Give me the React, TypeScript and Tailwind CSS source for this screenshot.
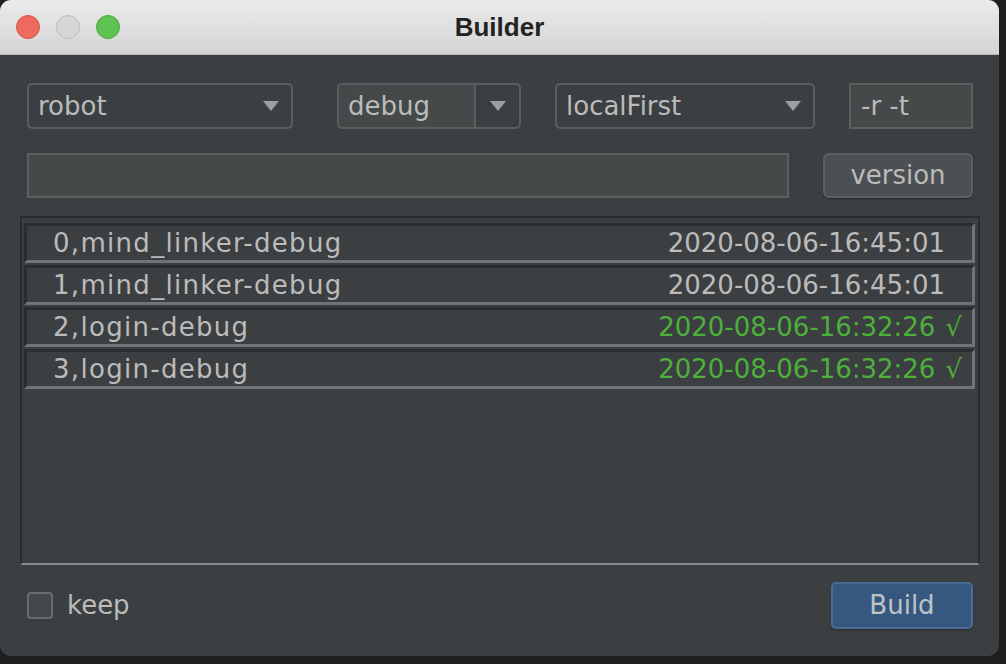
import React from "react";

type Build = { name: string; time: string; done: boolean };

const builds: Build[] = [
    { name: "0,mind_linker-debug", time: "2020-08-06-16:45:01", done: false },
    { name: "1,mind_linker-debug", time: "2020-08-06-16:45:01", done: false },
    { name: "2,login-debug", time: "2020-08-06-16:32:26", done: true },
    { name: "3,login-debug", time: "2020-08-06-16:32:26", done: true },
];

function Arrow() {
    return (
        <svg width="16" height="10" viewBox="0 0 16 10">
            <polygon points="0,0 16,0 8,10" fill="#9c9fa2" />
        </svg>
    );
}

function Combo({ label, width }: { label: string; width: string }) {
    return (
        <div className={`${width} h-[46px] flex items-center justify-between border-2 border-[#5b5d5f] rounded-[5px] pl-[9px] pr-[12px]`}>
            <span>{label}</span>
            <Arrow />
        </div>
    );
}

export default function App() {
    return (
        <div className="w-[1006px] h-[664px] bg-[#1e1e1e] text-[#bbbbbb] text-[26px]" style={{ fontFamily: '"DejaVu Sans", sans-serif' }}>
            <div className="w-[999px] h-[656px] rounded-[11px] overflow-hidden flex flex-col bg-[#3c3f41]">

                {/* title bar */}
                <div className="h-[55px] shrink-0 grid grid-cols-[1fr_auto_1fr] items-center bg-gradient-to-b from-[#ebebeb] to-[#d4d4d4] border-b border-[#b6b6b6]">
                    <div className="flex gap-[16px] pl-[16px]">
                        <div className="w-[24px] h-[24px] rounded-full bg-[#ee6a5e] border border-[#d8554a]" />
                        <div className="w-[24px] h-[24px] rounded-full bg-[#d6d6d6] border border-[#bcbcbc]" />
                        <div className="w-[24px] h-[24px] rounded-full bg-[#5fc354] border border-[#4aa83e]" />
                    </div>
                    <div className="text-[26px] font-bold text-[#232323] leading-none" style={{ fontFamily: '"Liberation Sans", sans-serif' }}>Builder</div>
                    <div />
                </div>

                {/* options */}
                <div className="mt-[28px] pl-[27px] pr-[26px] flex h-[46px]">
                    <Combo label="robot" width="w-[266px]" />
                    <div className="ml-[44px] w-[184px] h-[46px] flex border-2 border-[#5b5d5f] rounded-[5px] overflow-hidden">
                        <div className="flex-1 bg-[#45494a] pl-[9px] flex items-center border-r-2 border-[#5b5d5f]">debug</div>
                        <div className="w-[43px] flex items-center justify-center"><Arrow /></div>
                    </div>
                    <div className="ml-[34px]">
                        <Combo label="localFirst" width="w-[260px]" />
                    </div>
                    <div className="ml-[34px] w-[124px] h-[46px] bg-[#45494a] border-2 border-[#5e6060] pl-[10px] flex items-center">-r -t</div>
                </div>

                <div className="mt-[24px] pl-[27px] pr-[26px] flex h-[45px]">
                    <div className="w-[762px] h-[45px] bg-[#45494a] border-2 border-[#5e6060]" />
                    <button className="ml-[34px] w-[150px] h-[45px] rounded-[6px] bg-[#4c5052] border-2 border-[#5e6060] text-[#bbbbbb] shadow-[0_1px_2px_rgba(0,0,0,0.35)]">version</button>
                </div>

                {/* build list */}
                <div className="mt-[18px] ml-[20px] w-[960px] h-[349px] border-t-2 border-l-2 border-r-2 border-[#2b2b2b] border-b-2 border-b-[#8a8b8c] pt-[5px] pl-[2px] pr-[3px] flex flex-col gap-[2px]">
                    {builds.map(b => (
                        <div key={b.name} className="h-[40px] flex items-center border-t-[3px] border-l-[3px] border-[#2a2c2e] border-b-[3px] border-r-[3px] border-b-[#717476] border-r-[#717476] pl-[26px] pr-[10px]">
                            <span className="flex-1 tracking-[1.3px]">{b.name}</span>
                            <span className={b.done ? "text-[#4cb03a]" : ""}>{b.time}</span>
                            {b.done
                                ? <span className="ml-[10px] text-[#4cb03a]">√</span>
                                : <span className="w-[17px]" />}
                        </div>
                    ))}
                </div>

                {/* footer */}
                <div className="mt-[17px] pl-[27px] pr-[26px] flex items-center justify-between h-[47px]">
                    <label className="flex items-center gap-[14px]">
                        <span className="w-[26px] h-[27px] rounded-[4px] bg-[#43494a] border-2 border-[#6b6b6b]" />
                        <span>keep</span>
                    </label>
                    <button className="w-[142px] h-[47px] rounded-[5px] bg-[#365880] border-2 border-[#4a6d96] text-[#bfc3c7] shadow-[0_1px_2px_rgba(0,0,0,0.35)]">Build</button>
                </div>
            </div>
        </div>
    );
}
